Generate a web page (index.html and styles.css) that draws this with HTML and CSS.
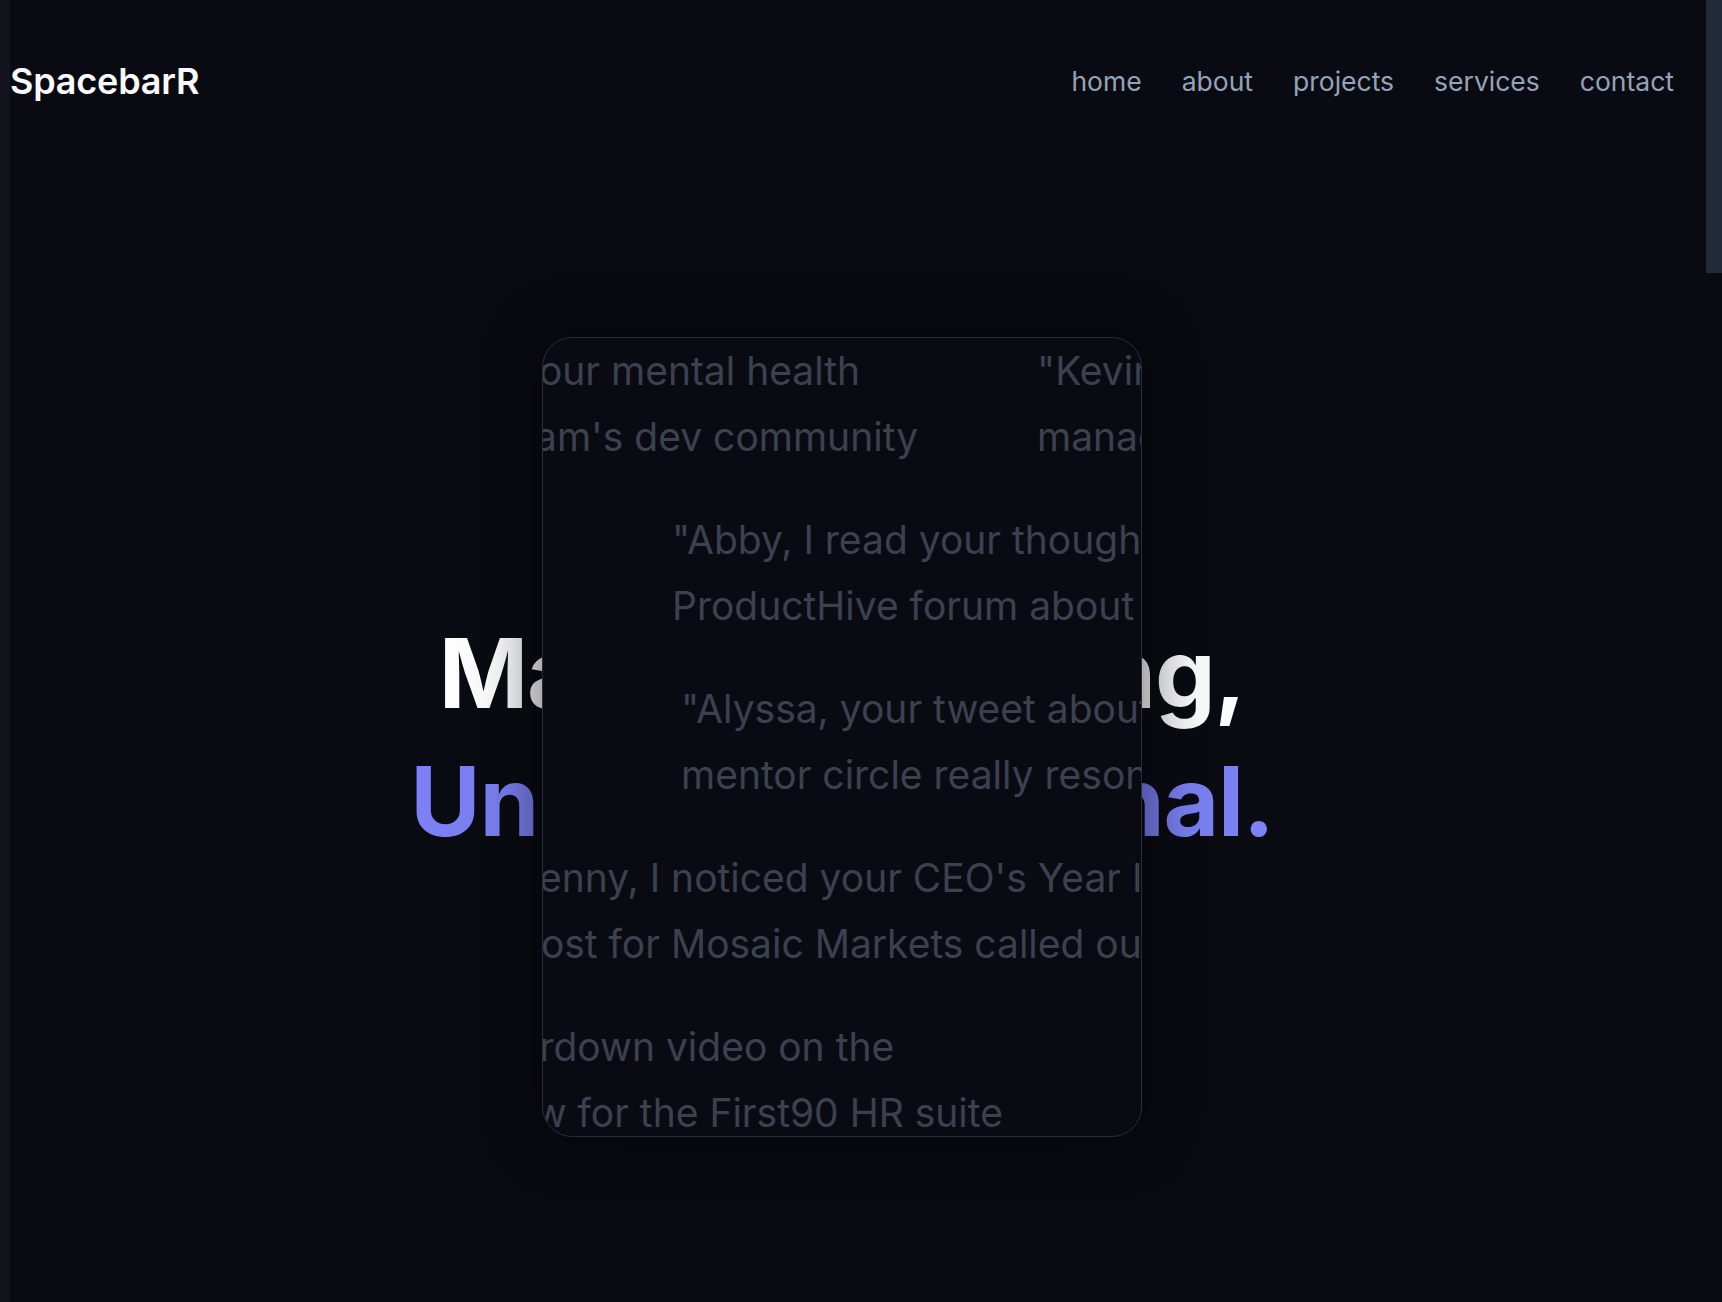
FILE: index.html
```html
<!DOCTYPE html>
<html lang="en">
<head>
<meta charset="utf-8">
<title>SpacebarR</title>
<link rel="stylesheet" href="styles.css">
</head>
<body>
<div class="rail"></div>
<div class="page">
  <header class="topbar">
    <a class="logo" href="#">SpacebarR</a>
    <nav class="nav">
      <a href="#">home</a>
      <a href="#">about</a>
      <a href="#">projects</a>
      <a href="#">services</a>
      <a href="#">contact</a>
    </nav>
  </header>
  <main class="hero">
    <div class="stage">
      <h1 class="headline">
        <span class="line line-light">Mass Messaging,</span>
        <span class="line line-accent">Uniquely Personal.</span>
      </h1>
      <div class="card">
        <div class="row row-1">
          <div class="item item-wide">
            <span class="ln">"Maya, your openness about your mental health</span>
            <span class="ln ln-nudge-9">while actively growing your team's dev community</span>
          </div>
          <div class="item">
            <span class="ln">"Kevin, your post on engineering</span>
            <span class="ln">management burnout hit home</span>
          </div>
        </div>
        <div class="row row-2">
          <div class="item">
            <span class="ln">"Abby, I read your thoughts on the</span>
            <span class="ln">ProductHive forum about onboarding</span>
          </div>
        </div>
        <div class="row row-3">
          <div class="item">
            <span class="ln">"Alyssa, your tweet about the</span>
            <span class="ln">mentor circle really resonated</span>
          </div>
        </div>
        <div class="row row-4">
          <div class="item">
            <span class="ln">"Jenny, I noticed your CEO's Year In Review</span>
            <span class="ln ln-nudge-12">post for Mosaic Markets called out growth</span>
          </div>
        </div>
        <div class="row row-5">
          <div class="item">
            <span class="ln">"Sam, the teardown video on the</span>
            <span class="ln">product review for the First90 HR suite</span>
          </div>
        </div>
      </div>
    </div>
  </main>
</div>
<div class="scrollbar"><div class="thumb"></div></div>
</body>
</html>
```

FILE: styles.css
```css
* { box-sizing: border-box; }

html, body {
  margin: 0;
  height: 100%;
}

body {
  display: flex;
  overflow: hidden;
  background: #0a0b12;
  font-family: Inter, "Noto Sans", "Liberation Sans", sans-serif;
  color: #fff;
}

.rail {
  flex: none;
  width: 10px;
  background: #12131b;
}

.page {
  flex: 1;
  min-width: 0;
  display: flex;
  flex-direction: column;
  padding-right: 32px;
}

.topbar {
  height: 162px;
  display: flex;
  align-items: center;
  justify-content: space-between;
}

.logo {
  font-size: 36px;
  font-weight: 600;
  color: #f9fafb;
  text-decoration: none;
  letter-spacing: -0.2px;
}

.nav {
  display: flex;
  gap: 40px;
}

.nav a {
  font-size: 26.5px;
  color: #94a3b8;
  text-decoration: none;
}

.hero {
  flex: 1;
}

.stage {
  display: grid;
  justify-items: center;
  align-items: center;
  padding-top: 175px;
}

.stage > * {
  grid-area: 1 / 1;
}

.headline {
  margin: 0;
  display: flex;
  flex-direction: column;
  align-items: center;
  font-size: 96px;
  font-weight: 700;
  line-height: 128px;
  letter-spacing: -1.2px;
}

.line {
  display: block;
  -webkit-background-clip: text;
  background-clip: text;
  color: transparent;
}

.line-light {
  background-image: linear-gradient(90deg, #ffffff 0%, #c9cbd1 45%, #c9cbd1 60%, #ffffff 100%);
}

.line-accent {
  background-image: linear-gradient(90deg, #7c82f6 0%, #6a6ed2 45%, #6a6ed2 60%, #7d83f7 100%);
}

.card {
  position: relative;
  width: 600px;
  height: 800px;
  border: 1px solid #262d3c;
  border-radius: 30px;
  background: #0a0b12;
  box-shadow: 0 0 50px 12px rgba(0, 0, 0, 0.4);
  overflow: hidden;
  display: flex;
  flex-direction: column;
  gap: 37px;
  font-size: 39px;
  line-height: 66px;
  color: #3c4150;
}

.row {
  display: flex;
  gap: 60px;
  white-space: nowrap;
}

.item {
  flex: none;
  display: flex;
  flex-direction: column;
}

.item-wide {
  width: 1000px;
}

.ln { display: block; }
.ln-nudge-9 { padding-left: 9px; }
.ln-nudge-12 { padding-left: 12px; }

.row-1 { margin-left: -566px; }
.row-2 { margin-left: 129px; }
.row-3 { margin-left: 138px; }
.row-4 { margin-left: -38px; }
.row-5 { margin-left: -252px; }

.scrollbar {
  flex: none;
  width: 16px;
  background: #0a0b12;
}

.thumb {
  height: 273px;
  background: #222a39;
}
```
